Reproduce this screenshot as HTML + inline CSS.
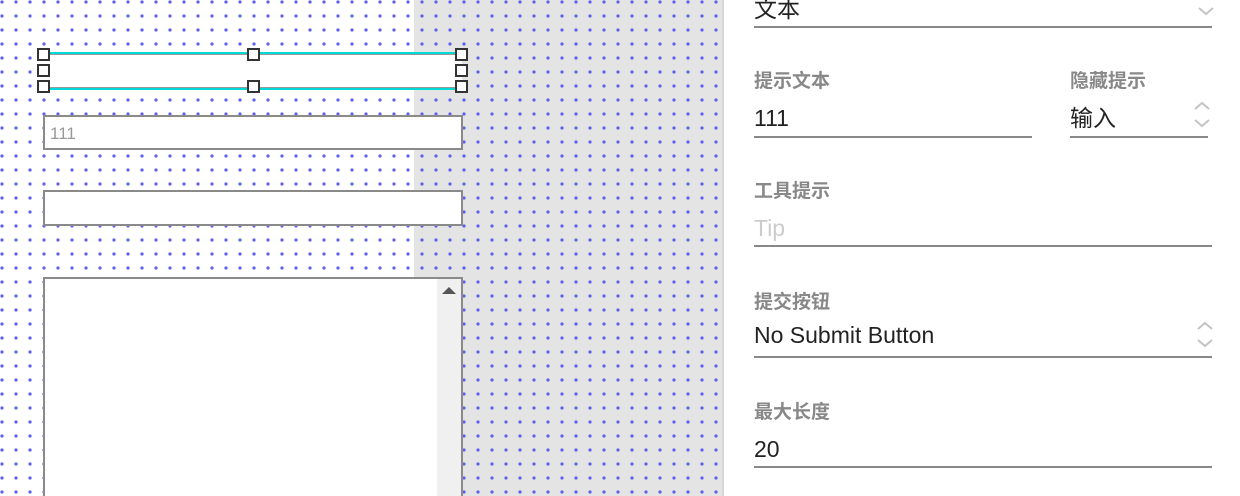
<!DOCTYPE html>
<html><head><meta charset="utf-8"><style>
*{margin:0;padding:0;box-sizing:border-box}
html,body{width:1240px;height:496px;overflow:hidden}
body{background:#fff;position:relative;font-family:"Liberation Sans","Noto Sans CJK SC",sans-serif}
.canvas{position:absolute;left:0;top:0;width:722px;height:496px;background:linear-gradient(to right,#fff 0,#fff 414px,#e4e4e4 414px);}
.dots{position:absolute;left:0;top:0;width:722px;height:496px;background-image:radial-gradient(circle at 2px 2px,#6060f0 1.4px,transparent 1.9px);background-size:14px 14px}
.vline{position:absolute;left:722px;top:0;width:2px;height:496px;background:#d8d8d8}
.box{position:absolute;background:#fff;border:2px solid #8a8a8a}
.h{position:absolute;width:13px;height:13px;border:2px solid #333;background:#fff}
.lbl{position:absolute;font-size:19px;font-weight:bold;color:#888}
.val{position:absolute;font-size:23px;color:#222}
.ul{position:absolute;height:2px;background:#888}
</style></head><body>
<div class="canvas"></div><div class="dots"></div><div class="vline"></div>
<div style="position:absolute;left:44px;top:52px;width:418px;height:2px;background:#00d8d8"></div>
<div style="position:absolute;left:44px;top:54px;width:418px;height:34px;background:#fff;border-top:1px solid #999;border-bottom:1px solid #999"></div>
<div style="position:absolute;left:44px;top:88px;width:418px;height:2px;background:#00d8d8"></div>
<div class="h" style="left:37px;top:48px"></div><div class="h" style="left:247px;top:48px"></div><div class="h" style="left:455px;top:48px"></div>
<div class="h" style="left:37px;top:64px"></div><div class="h" style="left:455px;top:64px"></div>
<div class="h" style="left:37px;top:80px"></div><div class="h" style="left:247px;top:80px"></div><div class="h" style="left:455px;top:80px"></div>
<div class="box" style="left:43px;top:115px;width:420px;height:35px;font-size:17px;color:#999;padding:7px 0 0 5px">111</div>
<div class="box" style="left:43px;top:190px;width:420px;height:36px"></div>
<div class="box" style="left:43px;top:277px;width:420px;height:230px"><div style="position:absolute;right:0;top:0;width:24px;height:100%;background:#f0f0f0"></div><div style="position:absolute;right:5px;top:8px;width:0;height:0;border-left:7px solid transparent;border-right:7px solid transparent;border-bottom:7px solid #555"></div></div>

<div class="val" style="left:754px;top:-10px">文本</div>
<div class="ul" style="left:754px;top:26px;width:458px"></div>
<svg style="position:absolute;left:1197px;top:4px" width="18" height="14"><path d="M2 4 L9 10 L16 4" stroke="#c4c4c4" stroke-width="2" fill="none"/></svg>

<div class="lbl" style="left:754px;top:66px">提示文本</div>
<div class="val" style="left:754px;top:105px">111</div>
<div class="ul" style="left:754px;top:136px;width:278px"></div>
<div class="lbl" style="left:1070px;top:66px">隐藏提示</div>
<div class="val" style="left:1070px;top:99px">输入</div>
<div class="ul" style="left:1070px;top:136px;width:138px"></div>
<svg style="position:absolute;left:1193px;top:100px" width="18" height="30"><path d="M2 9 L9 3 L16 9 M2 20 L9 26 L16 20" stroke="#c4c4c4" stroke-width="2" fill="none"/></svg>

<div class="lbl" style="left:754px;top:176px">工具提示</div>
<div class="val" style="left:754px;top:215px;color:#ccc">Tip</div>
<div class="ul" style="left:754px;top:245px;width:458px"></div>

<div class="lbl" style="left:754px;top:287px">提交按钮</div>
<div class="val" style="left:754px;top:322px">No Submit Button</div>
<div class="ul" style="left:754px;top:356px;width:458px"></div>
<svg style="position:absolute;left:1196px;top:320px" width="18" height="30"><path d="M2 9 L9 3 L16 9 M2 20 L9 26 L16 20" stroke="#c4c4c4" stroke-width="2" fill="none"/></svg>

<div class="lbl" style="left:754px;top:397px">最大长度</div>
<div class="val" style="left:754px;top:436px">20</div>
<div class="ul" style="left:754px;top:466px;width:458px"></div>
</body></html>
